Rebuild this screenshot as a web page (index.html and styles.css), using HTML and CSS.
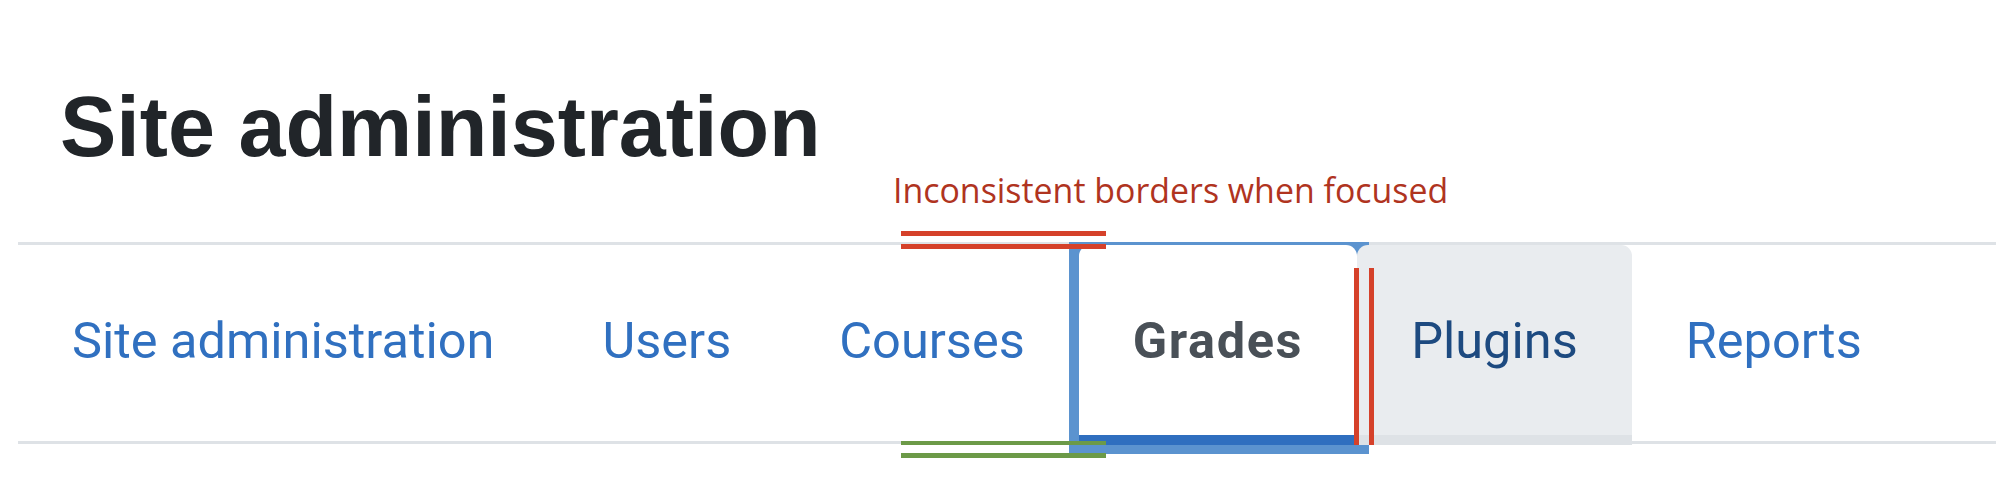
FILE: index.html
```html
<!DOCTYPE html>
<html lang="en">
<head>
  <meta charset="UTF-8" />
  <meta name="viewport" content="width=device-width, initial-scale=1.0"/>
  <title>Site administration</title>
  <link rel="stylesheet" href="styles.css">
</head>
<body>

<div class="page">
  <h1 class="page-title">Site administration</h1>
  <p class="note">Inconsistent borders when focused</p>

  <nav class="tabs-wrap">
    <ul class="tabs">
      <li><a class="tab" href="#">Site administration</a></li>
      <li><a class="tab" href="#">Users</a></li>
      <li><a class="tab" href="#">Courses</a></li>
      <li><a class="tab active" href="#">Grades</a></li>
      <li><a class="tab hovered" href="#">Plugins</a></li>
      <li><a class="tab" href="#">Reports</a></li>
    </ul>

    <!-- annotation marks -->
    <span class="mark mark-red mark-top-a"></span>
    <span class="mark mark-red mark-top-b"></span>
    <span class="mark mark-green mark-bottom-a"></span>
    <span class="mark mark-green mark-bottom-b"></span>
    <span class="mark mark-red mark-side-a"></span>
    <span class="mark mark-red mark-side-b"></span>
  </nav>
</div>

</body>
</html>
```

FILE: styles.css
```css
:root {
  --title-color: #212529;
  --link-color: #3070c0;
  --link-hover: #1d4a80;
  --active-color: #495057;
  --line-color: #dee2e6;
  --tab-hover-bg: #e9ecef;
  --focus-light: #5b93cf;
  --focus-dark: #2f6fbf;
  --note-red: #b0341f;
  --mark-red: #d5412a;
  --mark-green: #6c9a48;
}

* {
  box-sizing: border-box;
}

body {
  margin: 0;
  background: white;
  font-family: 'Liberation Sans', Arial, sans-serif;
}

.page {
  min-height: 486px;
  padding: 84px 0 0 18px;
}

.page-title {
  margin: 0;
  padding-left: 42px;
  font-size: 84.5px;
  line-height: 86px;
  font-weight: bold;
  color: var(--title-color);
}

.note {
  margin: 0 0 32px;
  padding-left: 875px;
  font-family: 'Open Sans', sans-serif;
  font-size: 33.9px;
  line-height: 40px;
  color: var(--note-red);
}

.tabs-wrap {
  position: relative;
  z-index: 0;
  border-top: 3px solid var(--line-color);
  border-bottom: 3px solid var(--line-color);
}

.tabs {
  display: flex;
  margin: 0;
  padding: 0;
  list-style: none;
}

.tabs li {
  display: flex;
  margin-bottom: -4px;
}

.tab {
  display: flex;
  align-items: center;
  height: 200px;
  padding: 0 54px;
  border-bottom: 10px solid transparent;
  font-family: Roboto, 'Liberation Sans', sans-serif;
  font-size: 50.5px;
  color: var(--link-color);
  text-decoration: none;
}

.tab.active {
  position: relative;
  background: white;
  border-radius: 11px 11px 0 0;
  border-bottom-color: var(--focus-dark);
  color: var(--active-color);
  font-weight: bold;
  letter-spacing: 1.6px;
}

/* focus ring drawn behind the active tab */
.tab.active::before {
  content: '';
  position: absolute;
  left: -10px;
  top: -3px;
  right: -12px;
  bottom: -19px;
  background: var(--focus-light);
  z-index: -1;
}

.tab.hovered {
  background: var(--tab-hover-bg);
  border-radius: 11px 11px 0 0;
  border-bottom-color: var(--line-color);
  color: var(--link-hover);
}

.mark {
  position: absolute;
  z-index: 1;
}

.mark-red {
  background: var(--mark-red);
}

.mark-green {
  background: var(--mark-green);
}

.mark-top-a,
.mark-top-b,
.mark-bottom-a,
.mark-bottom-b {
  left: 883px;
  width: 205px;
  height: 5px;
}

.mark-top-a { top: -14px; }
.mark-top-b { top: -1px; }
.mark-bottom-a { top: 196px; height: 4px; }
.mark-bottom-b { top: 208px; }

.mark-side-a,
.mark-side-b {
  top: 23px;
  width: 5px;
  height: 177px;
}

.mark-side-a { left: 1336px; }
.mark-side-b { left: 1351px; }
```
